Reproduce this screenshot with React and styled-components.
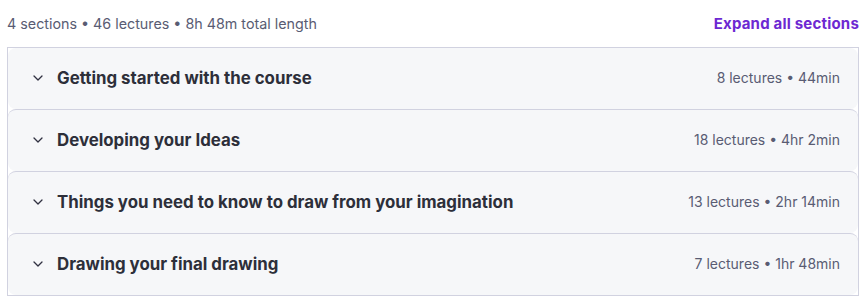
import React from "react";
import styled, { createGlobalStyle } from "styled-components";

const Global = createGlobalStyle`
  html, body { margin: 0; padding: 0; background: #fff; }
  body { font-family: Inter, "Noto Sans", sans-serif; color: #303141; }
`;

const Page = styled.div`
  padding: 0 1px 0 7px;
  width: 852px;
`;

const Summary = styled.div`
  display: flex;
  justify-content: space-between;
  align-items: center;
  height: 47px;
`;

const Stats = styled.span`
  font-size: 14.3px;
  color: #595c73;
`;

const ExpandBtn = styled.button`
  border: none;
  background: none;
  padding: 0;
  font-family: inherit;
  font-size: 15px;
  font-weight: 700;
  letter-spacing: 0.2px;
  color: #6d28d2;
  cursor: pointer;
`;

const Accordion = styled.div`
  border: 1px solid #d1d2e0;
  display: flex;
  flex-direction: column;
`;

const Row = styled.div`
  height: 59px;
  display: flex;
  align-items: center;
  background: #f6f7f9;
  border-radius: 8px;
  padding: 0 18px 2px 23px;
  border-top: ${(p) => (p.$first ? "none" : "1px solid #d1d2e0")};
  box-sizing: content-box;
  gap: 12px;
`;

const Chevron = styled.svg`
  width: 14px;
  height: 14px;
  flex: none;
  color: #303141;
`;

const Title = styled.span`
  flex: 1;
  font-size: 16.85px;
  font-weight: 700;
  color: #2d2f3a;
`;

const Meta = styled.span`
  font-size: 14px;
  color: #595c73;
`;

const sections = [
  ["Getting started with the course", "8 lectures • 44min"],
  ["Developing your Ideas", "18 lectures • 4hr 2min"],
  ["Things you need to know to draw from your imagination", "13 lectures • 2hr 14min"],
  ["Drawing your final drawing", "7 lectures • 1hr 48min"],
];

export default function App() {
  return (
    <>
      <Global />
      <Page>
        <Summary>
          <Stats>4 sections • 46 lectures • 8h 48m total length</Stats>
          <ExpandBtn>Expand all sections</ExpandBtn>
        </Summary>
        <Accordion>
          {sections.map(([t, m], i) => (
            <Row key={t} $first={i === 0}>
              <Chevron viewBox="0 0 14 14" fill="none">
                <path d="M3 5 L7 9 L11 5" stroke="currentColor" strokeWidth="1.3" strokeLinecap="round" strokeLinejoin="round" />
              </Chevron>
              <Title>{t}</Title>
              <Meta>{m}</Meta>
            </Row>
          ))}
        </Accordion>
      </Page>
    </>
  );
}
